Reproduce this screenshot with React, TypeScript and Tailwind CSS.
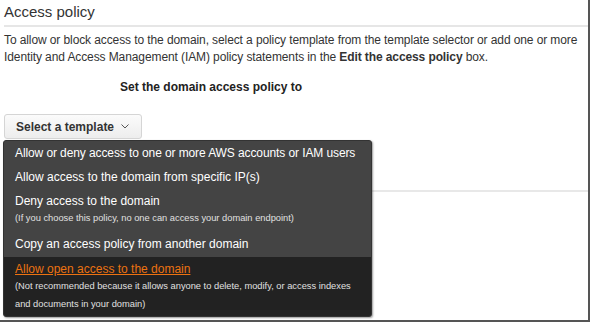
import React from "react";

export default function App() {
  return (
    <div
      className="w-[590px] h-[322px] bg-white relative overflow-hidden border-r-2 border-b-2 border-[#555] text-[#333]"
      style={{ fontFamily: '"Liberation Sans", Arial, sans-serif' }}
    >
      <div className="pl-[4px]">
        <div className="h-[25px] flex items-end pb-[4px] text-[15px] leading-[18px] text-[#333]">Access policy</div>
        <div className="h-[2px] bg-[#e6e6e6]" />
        <p className="mt-[4.5px] text-[12px] leading-[17px] text-[#333] whitespace-nowrap tracking-[-0.1px]">
          To allow or block access to the domain, select a policy template from the template selector or add one or more
          <br />
          Identity and Access Management (IAM) policy statements in the <b>Edit the access policy</b> box.
        </p>
        <div className="mt-[13px] pl-[116px] text-[12px] leading-[17px] font-bold text-[#222]">Set the domain access policy to</div>
        <div className="mt-[18.5px] relative">
          <button className="h-[25px] w-[138px] pl-[11px] rounded-[3px] border border-[#d5d5d5] bg-gradient-to-b from-[#fbfbfb] to-[#ededed] text-[12px] font-bold text-[#333] flex items-center gap-[7px]">
            Select a template
            <svg width="8" height="5" viewBox="0 0 8 5" fill="none" stroke="#555" strokeWidth="1">
              <path d="M0.5 0.5l3.5 3.5L7.5 0.5" />
            </svg>
          </button>
          <div className="absolute left-[-1px] top-[26px] w-[369px] rounded-[3px] overflow-hidden bg-[#444] border border-[#333] shadow-[1px_1px_2px_rgba(0,0,0,0.4)] z-10">
            <div>
              <div className="px-[11px] h-[24px] flex items-center text-[12px] text-white whitespace-nowrap tracking-[-0.1px]">Allow or deny access to one or more AWS accounts or IAM users</div>
              <div className="px-[11px] h-[24px] flex items-center text-[12px] text-white">Allow access to the domain from specific IP(s)</div>
              <div className="px-[11px] pt-[4px]">
                <div className="text-[12px] leading-[16px] text-white">Deny access to the domain</div>
                <div className="text-[9.3px] leading-[18px] text-[#e0e0e0]">(If you choose this policy, no one can access your domain endpoint)</div>
              </div>
              <div className="px-[11px] pt-[9px] pb-[5px] text-[12px] leading-[16px] text-white">Copy an access policy from another domain</div>
            </div>
            <div className="bg-[#222] px-[11px] pt-[4px] pb-[3px]">
              <div className="text-[12px] leading-[16px] text-[#ec7211] underline">Allow open access to the domain</div>
              <div className="text-[9.3px] leading-[18px] text-[#e0e0e0] whitespace-nowrap">
                (Not recommended because it allows anyone to delete, modify, or access indexes
                <br />
                and documents in your domain)
              </div>
            </div>
          </div>
        </div>
      </div>
      <div className="absolute left-[372px] right-0 top-[190px] h-[2px] bg-[#e8e8e8]" />
    </div>
  );
}
